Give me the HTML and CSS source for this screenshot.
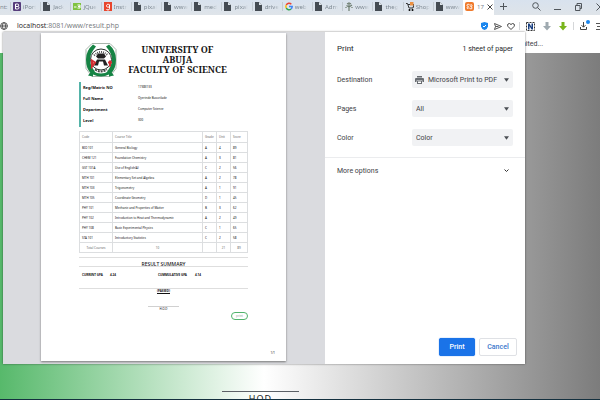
FILE: index.html
```
<!DOCTYPE html>
<html lang="en">
<head>
<meta charset="utf-8">
<title>Print result</title>
<link rel="stylesheet" href="styles.css">
</head>
<body>
<svg class="defs" aria-hidden="true">
  <symbol id="doc" viewBox="0 0 8 9"><path fill="#444b52" d="M0 0h4l3 3v6H0z"/><path fill="#dde4ea" d="M4 0v3h3z"/></symbol>
  <symbol id="caret" viewBox="0 0 6 4"><path fill="#4b4f54" d="M0 0h6L3 4z"/></symbol>
</svg>
<div class="browser">
  <header class="tabbar">
    <div class="tab-stub">nt:</div>
    <nav class="tabs">
      <div class="tab"><svg viewBox="0 0 8 9"><rect width="8" height="9" rx="1" fill="#563d7c"/><path fill="none" stroke="#fff" d="M2.500 2h2q1.200 0 1.200 1.200T4.500 4.500h-2M2.500 4.500h2.200q1.300 0 1.300 1.200T4.700 7H2.500V2"/></svg><span>iPort</span></div>
      <div class="tab"><svg><use href="#doc"/></svg><span>Jack</span></div>
      <div class="tab"><svg viewBox="0 0 8 9"><rect y="1" width="8" height="7" fill="#80c342"/><path d="M1 5h2.500M4.500 3h2.500v3H4.500M5 4.500h2" stroke="#fff" fill="none"/></svg><span>jQue</span></div>
      <div class="tab"><svg viewBox="0 0 8 9"><rect width="8" height="9" fill="#e8452c"/><path d="M5.500 2.500v4q0 1.500-1.500 1.500T2.500 7M5.500 4a1.500 1.500 0 1 1 0-.5" stroke="#fff" fill="none"/></svg><span>Instr</span></div>
      <div class="tab"><svg><use href="#doc"/></svg><span>pixal</span></div>
      <div class="tab"><svg><use href="#doc"/></svg><span>www</span></div>
      <div class="tab"><svg><use href="#doc"/></svg><span>med</span></div>
      <div class="tab"><svg><use href="#doc"/></svg><span>pixal</span></div>
      <div class="tab"><svg><use href="#doc"/></svg><span>drive</span></div>
      <div class="tab"><svg viewBox="0 0 8 9" fill="none" stroke-width="1.500"><path stroke="#ea4335" d="M1.300 3a3 3 0 0 1 5-.8"/><path stroke="#fbbc05" d="M1.300 3a3.200 3.200 0 0 0 0 3"/><path stroke="#34a853" d="M1.300 6a3 3 0 0 0 4.700 1"/><path stroke="#4285f4" d="M4 4.500h3.200q0 1.700-1.200 2.500"/></svg><span>web</span></div>
      <div class="tab"><svg><use href="#doc"/></svg><span>Adm</span></div>
      <div class="tab"><svg viewBox="0 0 8 9"><path d="M4 9V2M4 5L1.500 3.500M4 5l3-2M2 2l2-1 2 1M1 5v1M7 5v1" stroke="#6d7d70" stroke-width="1.200" fill="none"/></svg><span>www</span></div>
      <div class="tab"><svg><use href="#doc"/></svg><span>theg</span></div>
      <div class="tab"><svg viewBox="0 0 8 9"><path d="M0 1.500h1.500L3 6h4l1-3.500H2" stroke="#333" fill="none"/><circle cx="3.500" cy="8" r="1"/><circle cx="6.500" cy="8" r="1"/><rect x="4" width="3.500" height="3.500" fill="#ed9142"/></svg><span>Shop</span></div>
      <div class="tab"><svg><use href="#doc"/></svg><span>www</span></div>
    </nav>
    <div class="tab-active"><svg viewBox="0 0 9 9"><rect width="9" height="9" rx="2" fill="#f07a2b"/><path d="M2 3.500C2 1.500 4 2 4.500 3S7 1.500 7 3.500 5.500 4 5.500 4.500 7 4.500 7 6 5 7 4.500 6 2 7.500 2 6s1.500-1 1.500-1.500S2 4.500 2 3.500z" fill="none" stroke="#fff" stroke-width=".9"/></svg><span>17</span><svg class="close" viewBox="0 0 6 6"><path d="M.5.500l5 5M5.500.5l-5 5" stroke="#444"/></svg></div>
    <div class="controls">
      <svg width="7" height="7" viewBox="0 0 7 7"><path d="M3.500 0v7M0 3.500h7"/></svg>
      <i></i>
      <svg width="9" height="9" viewBox="0 0 9 9"><circle cx="3.500" cy="3.500" r="2.800"/><path d="M5.500 5.500l3 3"/></svg>
      <svg width="7" height="9" viewBox="0 0 7 9"><path d="M0 7.500h7"/></svg>
      <svg width="7" height="8" viewBox="0 0 7 8"><path d="M.5 2.500h4.500v5H.5zM2 2.500V.5h4.500v5H5"/></svg>
      <svg class="last" width="4" height="8" viewBox="0 0 4 8"><path d="M.5.500L4 4 .5 7.500"/></svg>
    </div>
  </header>
  <div class="toolbar">
    <svg width="8" height="8" viewBox="0 0 8 8" fill="none" stroke="#555"><circle cx="4" cy="4" r="3.400"/><ellipse cx="4" cy="4" rx="1.500" ry="3.400"/><path d="M.5 4h7"/></svg>
    <div class="url"><b>localhost</b>:8081/www/result.php</div>
    <div class="tools">
      <svg width="7" height="8" viewBox="0 0 7 8"><path d="M3.500 0L7 1v3.500Q6.500 7 3.500 8 .5 7 0 4.500V1z" fill="#1a86ee"/><path d="M2 4l1 1 2-2" stroke="#fff" fill="none"/></svg>
      <svg width="8" height="7" viewBox="0 0 8 7"><path d="M.5.500l7 3-7 3 1-3zM1.500 3.500h3" fill="none" stroke="#555"/></svg>
      <svg width="8" height="7" viewBox="0 0 8 7"><path d="M4 6.500L1 3.500Q0 2 1 1q1.500-1.200 3 .5Q5.500-.2 7 1q1 1 0 2.500z" fill="none" stroke="#444"/></svg>
      <i></i>
      <svg width="9" height="9" viewBox="0 0 9 9"><path d="M.5.500h8v8h-8z" fill="none" stroke="#333" stroke-dasharray="2 1"/><path d="M2 7.500v-6h1.500L5.500 5V1.500H7v6H5.500L3.500 4v3.500z" fill="#193f80"/></svg>
      <svg width="8" height="9" viewBox="0 0 8 9"><path d="M2.500 0h3v4H8L4 8.500 0 4h2.500z" fill="#9faab0"/></svg>
      <svg width="8" height="9" viewBox="0 0 8 9"><path d="M2.500 0h3v4H8L4 8.500 0 4h2.500z" fill="#79b51c"/></svg>
      <i></i>
      <span class="download"><svg width="7" height="8" viewBox="0 0 7 8"><path d="M.5 5v2.500h6V5M3.500 0v5M1.500 3.200l2 2 2-2" fill="none" stroke="#444"/></svg></span>
      <svg class="last" width="4" height="7" viewBox="0 0 4 7"><path d="M0 .5h4M1 3.500h3M0 6.500h4" stroke="#555"/></svg>
    </div>
  </div>
  <div class="bookmarks">Unlimited...</div>
  <main class="page"><div class="sign">HOD</div></main>
</div>

<section class="dialog" aria-label="Print">
  <div class="preview">
    <article class="paper">
      <div class="head">
        <svg class="crest" viewBox="0 0 32 36">
          <path d="M7 1h18l6 6v19l-6 8H7l-6-8V7z" fill="#fff" stroke="#a9b5ac"/>
          <path d="M8 2Q1 8 1 17t5 14l4-2Q5 23 5 17t6-13zM24 2q7 6 7 15t-5 14l-4-2q5-6 5-12T21 4z" fill="#168344"/>
          <path d="M3 33l4-5q9 6 18 0l4 5-5 1v-2q-8 4-16 0v2z" fill="#168344"/>
          <circle cx="16" cy="17" r="10.500" fill="#fff" stroke="#29332d"/>
          <path d="M9 13q7-7 14 0" fill="none" stroke="#555" stroke-width="2" stroke-dasharray="1 1"/>
          <path d="M10 27q6 4 12 0" fill="none" stroke="#444" stroke-width="2" stroke-dasharray="2 1"/>
          <path d="M13 11h6l2 3-2 2h-6l-2-2zM12 17h8l3 6h-4l-1-4h-4l-1 4H9z" fill="#222"/>
          <path d="M7 18l3 2-3 4zM23 20h4M25 18v6" stroke="#d32d32" stroke-width="2" fill="none"/>
        </svg>
        <h1>UNIVERSITY OF<br>ABUJA<br>FACULTY OF SCIENCE</h1>
      </div>
      <dl class="info">
        <dt>Reg/Matric NO</dt><dd>17383133</dd>
        <dt>Full Name</dt><dd>Oyerinde Busorilade</dd>
        <dt>Department</dt><dd>Computer Science</dd>
        <dt>Level</dt><dd>300</dd>
      </dl>
      <table class="results">
        <colgroup><col class="c-code"><col><col class="c-small"><col class="c-small"><col class="c-score"></colgroup>
        <thead><tr><th>Code</th><th>Course Title</th><th>Grade</th><th>Unit</th><th>Score</th></tr></thead>
        <tbody>
          <tr><td>BIO 101</td><td>General Biology</td><td>A</td><td>4</td><td>89</td></tr>
          <tr><td>CHEM 121</td><td>Foundation Chemistry</td><td>A</td><td>3</td><td>81</td></tr>
          <tr><td>GST 101A</td><td>Use of English(A)</td><td>C</td><td>2</td><td>56</td></tr>
          <tr><td>MTH 101</td><td>Elementary Set and Algebra</td><td>A</td><td>2</td><td>78</td></tr>
          <tr><td>MTH 103</td><td>Trigonometry</td><td>A</td><td>1</td><td>91</td></tr>
          <tr><td>MTH 105</td><td>Coordinate Geometry</td><td>D</td><td>1</td><td>45</td></tr>
          <tr><td>PHY 101</td><td>Mechanic and Properties of Matter</td><td>B</td><td>3</td><td>62</td></tr>
          <tr><td>PHY 102</td><td>Introduction to Heat and Thermodynamic</td><td>A</td><td>2</td><td>49</td></tr>
          <tr><td>PHY 108</td><td>Basic Experimental Physics</td><td>C</td><td>1</td><td>65</td></tr>
          <tr><td>STA 101</td><td>Introductory Statistics</td><td>C</td><td>2</td><td>58</td></tr>
        </tbody>
        <tfoot><tr><td>Total Courses</td><td>10</td><td></td><td>21</td><td>89</td></tr></tfoot>
      </table>
      <h2>RESULT SUMMARY</h2>
      <div class="gpa"><b>CURRENT GPA</b><b>4.24</b><b>CUMMULATIVE GPA</b><b>4.14</b></div>
      <div class="status"><u>(PASSED)</u></div>
      <div class="hod">H.O.D</div>
      <button class="mini" type="button">print</button>
      <footer>1/1</footer>
    </article>
  </div>
  <form class="side">
    <div class="title"><h2>Print</h2><span>1 sheet of paper</span></div>
    <div class="fields">
      <label for="dest">Destination</label>
      <div class="select with-icon"><select id="dest"><option>Microsoft Print to PDF</option></select><svg class="printer" viewBox="0 0 9 8"><path fill="#686c71" d="M2 0h5v1.500H2zM1 2h7q1 0 1 1v3H7.500V4.500h-6V6H0V3q0-1 1-1zM2 5h5v3H2z"/><path fill="#fff" d="M3 5.500h3V7H3z"/></svg><svg class="caret"><use href="#caret"/></svg></div>
      <label for="pages">Pages</label>
      <div class="select"><select id="pages"><option>All</option></select><svg class="caret"><use href="#caret"/></svg></div>
      <label for="color">Color</label>
      <div class="select"><select id="color"><option>Color</option></select><svg class="caret"><use href="#caret"/></svg></div>
    </div>
    <button class="more" type="button"><span>More options</span><svg width="5" height="4" viewBox="0 0 5 4"><path d="M.5.500l2 2 2-2" fill="none" stroke="#333"/></svg></button>
    <div class="actions"><button class="primary" type="button">Print</button><button type="button">Cancel</button></div>
  </form>
</section>
</body>
</html>
```
FILE: styles.css
```
* { box-sizing: border-box; }

body {
  margin: 0;
  font: 7px/10px Roboto, sans-serif;
  color: #3e4145;
}

h1, h2, dl, dd { margin: 0; }
svg { display: block; flex: none; }
button, select { font: inherit; color: inherit; margin: 0; }
.defs { position: absolute; width: 0; height: 0; }

.browser {
  display: flex;
  flex-direction: column;
  height: 100vh;
  overflow: hidden;
  border-bottom: 1px solid #14303f;
}

/* Tab strip */
.tabbar {
  display: flex;
  flex: none;
  height: 15px;
  background: linear-gradient(#d8e2ee, #dfe4e9);
  font: 6px/10px "Noto Sans", sans-serif;
  color: #7d8892;
}
.tab-stub { width: 10px; padding-top: 2px; }
.tabs { display: flex; flex: 1; min-width: 0; }
.tab {
  position: relative;
  display: flex;
  flex: 1;
  gap: 2px;
  min-width: 0;
  padding: 2px 2px 0 2px;
}
.tab::before {
  content: "";
  width: 1px;
  height: 9px;
  margin-left: -2px;
  background: #c3cbd2;
}
.tab svg { width: 8px; height: 9px; }
.tab span {
  overflow: hidden;
  white-space: nowrap;
  mask-image: linear-gradient(to right, #000 60%, transparent);
}
.tab-active {
  display: flex;
  gap: 3px;
  width: 31px;
  padding: 2px;
  background: #fff;
}
.tab-active svg { width: 9px; height: 9px; }
.tab-active .close { width: 6px; height: 6px; margin-top: 2px; }
.controls {
  display: grid;
  grid-template-columns: 18px 1fr 21px 21px 21px 11px;
  width: 106px;
  height: 13px;
  place-items: center;
}
.controls svg { fill: none; stroke: #50565c; }
.controls .last, .tools .last { justify-self: end; }

/* Address row */
.toolbar {
  display: flex;
  flex: none;
  align-items: center;
  height: 22px;
  background: #fff;
}
.url {
  flex: 1;
  padding-left: 9px;
  font: 7px/10px "Open Sans", sans-serif;
  color: #75797d;
}
.url b { font-weight: 400; color: #1f2326; }
.tools {
  display: grid;
  grid-template-columns: 14px 14px 12px 5px 16px 17px 16px 5px 14px 10px;
  place-items: center;
}
.tools i { width: 1px; height: 8px; background: #d5d7d9; }
.download { position: relative; }
.download::after {
  content: "";
  position: absolute;
  top: -2px;
  right: -3px;
  width: 4px;
  height: 4px;
  border-radius: 50%;
  background: #1a86ee;
}
.bookmarks {
  flex: none;
  height: 16px;
  padding: 2px 57px 0 0;
  background: #fff;
  text-align: right;
}
.page {
  display: flex;
  flex: 1;
  justify-content: center;
  align-items: flex-end;
  background: linear-gradient(to right, #57b96b, #fff 44%, #7c7c7c);
}
.sign {
  width: 77px;
  height: 8px;
  margin-right: 79px;
  border-top: 1px solid #5c6066;
  font: 9px/14px "Noto Sans", sans-serif;
  letter-spacing: 1px;
  text-align: center;
  color: #222;
}

/* Print dialog */
.dialog {
  position: absolute;
  top: 32px;
  right: 75px;
  bottom: 36px;
  left: 3px;
  display: flex;
  background: #fff;
  box-shadow: 0 0 2px rgba(0, 0, 0, .5);
}
.preview {
  display: flex;
  flex: 1;
  justify-content: center;
  padding: 1px 1px 3px 0;
  background: #dadbdf;
}
.paper {
  display: flex;
  flex-direction: column;
  width: 245px;
  padding: 9px 38px 3px;
  background: #fff;
  box-shadow: 0 1px 2px #777;
  font: 3px/5px "Noto Sans", sans-serif;
  color: #111;
}
.head { display: flex; align-items: flex-start; height: 40px; padding-left: 6px; }
.crest { width: 32px; height: 37px; }
.head h1 {
  flex: 1;
  padding: 3px 10px 0 0;
  font: bold 9px/10px "Noto Serif", "Liberation Serif", serif;
  text-align: center;
  white-space: nowrap;
  color: #151515;
}
.info {
  display: grid;
  grid-template-columns: 55px 1fr;
  grid-auto-rows: 11px;
  align-items: center;
  height: 45px;
  padding-left: 2px;
  border-left: 2px solid #54b3a8;
}
.info dt { font-size: 4px; font-weight: 700; }
.results {
  width: 100%;
  margin-top: 4px;
  border-collapse: collapse;
  table-layout: fixed;
}
.results tr { height: 10px; }
.results thead tr { height: 11px; }
.c-code { width: 33px; }
.c-small { width: 14px; }
.c-score { width: 17px; }
.results th, .results td {
  padding: 0 2px;
  border: 1px solid #dcdee0;
  line-height: 4px;
  text-align: left;
  white-space: nowrap;
}
.results th { font-weight: 400; color: #666; }
.results tfoot td { text-align: center; color: #666; }
.paper h2 {
  height: 10px;
  margin-top: 4px;
  border: 1px solid #dedede;
  border-width: 1px 0;
  font: 500 5px/12px "Noto Sans", sans-serif;
  text-align: center;
}
.gpa {
  display: grid;
  grid-template-columns: 28px 48px 37px 1fr;
  height: 22px;
  padding: 6px 0 0 3px;
  border-bottom: 1px solid #dedede;
  white-space: nowrap;
}
.status { text-align: center; font-weight: 700; }
.hod {
  width: 31px;
  margin: 12px auto 0;
  border-top: 1px solid #d0d0d0;
  text-align: center;
}
.mini {
  align-self: flex-end;
  width: 17px;
  height: 8px;
  padding: 0;
  border: 1px solid #51b36c;
  border-radius: 4px;
  background: #fff;
  color: #8ba894;
}
.paper footer { margin: auto -27px 0 0; padding-bottom: 2px; text-align: right; }

/* Options column */
.side { display: flex; flex-direction: column; width: 200px; }
.title {
  display: flex;
  justify-content: space-between;
  align-items: center;
  height: 34px;
  padding: 0 12px;
  color: #26292c;
}
.title h2 { font-size: 8px; font-weight: 400; }
.fields {
  display: grid;
  grid-template-columns: 1fr 101px;
  gap: 12px 0;
  align-items: center;
  padding: 5px 12px 11px;
  border-bottom: 1px solid #ebecee;
}
.select { position: relative; }
.select select {
  display: block;
  width: 100%;
  height: 17px;
  padding: 0 4px;
  border: 0;
  border-radius: 2px;
  appearance: none;
  background: #f1f2f4;
}
.with-icon select { padding-left: 16px; }
.printer { position: absolute; top: 5px; left: 3px; width: 9px; height: 8px; }
.caret { position: absolute; top: 7px; right: 4px; width: 5px; height: 4px; }
.more {
  display: flex;
  justify-content: space-between;
  align-items: center;
  height: 26px;
  padding: 0 16px 0 12px;
  border: 0;
  background: none;
}
.actions {
  display: flex;
  gap: 4px;
  justify-content: flex-end;
  margin: auto 8px 8px 0;
}
.actions button {
  width: 38px;
  height: 18px;
  padding: 0;
  border: 1px solid #dfe1e5;
  border-radius: 2px;
  background: #fff;
  font-weight: 500;
  color: #3c78cc;
}
.actions .primary {
  width: 36px;
  border-color: #1a73e8;
  background: #1a73e8;
  box-shadow: 0 0 1px #1a73e8;
  color: #fff;
}
```
